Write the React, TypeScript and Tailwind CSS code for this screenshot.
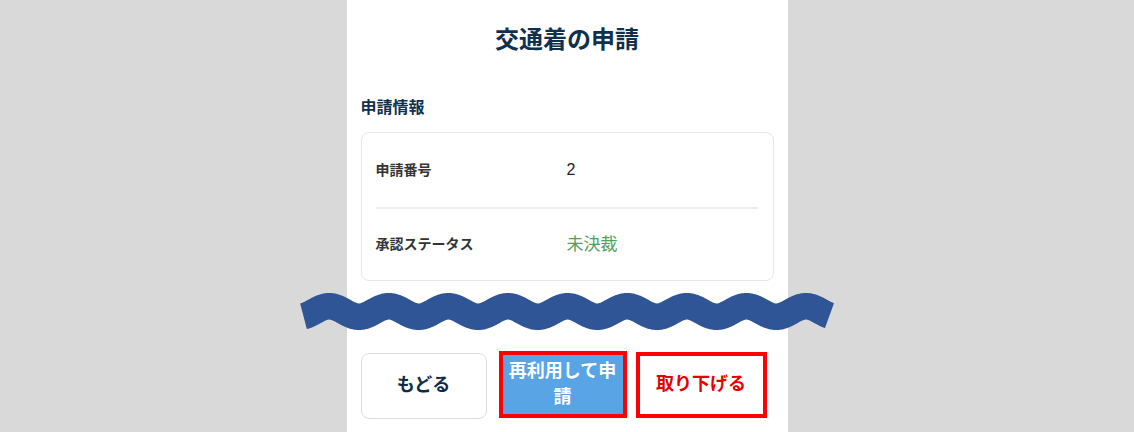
import React from "react";

const buildWave = () => {
  const x0 = 303.5;
  const x1 = 829.5;
  const crest = 329.2;
  const period = 59.6;
  const amp = 5.25;
  const mid = 311.5;
  const pts: string[] = [];
  for (let x = x0; x <= x1 + 0.001; x += 1) {
    const y = mid - amp * Math.cos((2 * Math.PI * (x - crest)) / period);
    pts.push(`${(x - 290).toFixed(2)},${(y - 280).toFixed(2)}`);
  }
  return "M" + pts.join(" L");
};

const wavePath = buildWave();

export default function App() {
  const font = { fontFamily: '"Liberation Sans", "Noto Sans CJK JP", "Noto Sans", sans-serif' };
  return (
    <div className="relative w-full h-[432px] bg-[#d9d9d9] overflow-hidden" style={font}>
      <div className="mx-auto w-[441px] h-[432px] bg-white px-[14px]">
        <div className="h-[80px] flex items-center justify-center">
          <h1 className="text-[24px] font-bold text-[#10304d] leading-none">交通着の申請</h1>
        </div>
        <div className="mt-[16px] h-[24px] flex items-center">
          <h2 className="text-[16px] font-bold text-[#10304d] leading-none">申請情報</h2>
        </div>
        <div className="mt-[12px] border border-[#e6e6e6] rounded-[8px] px-[14px]">
          <div className="h-[74px] flex items-center">
            <div className="w-[191px] text-[14px] font-bold text-[#333333]">申請番号</div>
            <div className="text-[16px] text-[#222222]">2</div>
          </div>
          <div className="h-[2px] bg-[#eeeeee] mr-[1px]" />
          <div className="h-[71px] flex items-center">
            <div className="w-[191px] text-[14px] font-bold text-[#333333]">承認ステータス</div>
            <div className="text-[17px] text-[#52a060]">未決裁</div>
          </div>
        </div>
        <div className="mt-[70px] flex items-start">
          <button className="w-[126px] h-[66px] mt-[2px] border border-[#dddddd] rounded-[8px] bg-white flex items-center justify-center text-[18px] font-bold text-[#0f2b46] pb-[2px]">
            もどる
          </button>
          <button className="ml-[12px] w-[128px] h-[67px] border-[4px] border-[#ff0000] bg-[#58a4e4] flex items-center justify-center text-center text-[18px] leading-[26px] font-bold text-white px-[4px] pb-[2px]">
            再利用して申請
          </button>
          <button className="ml-[9px] w-[131px] h-[66px] mt-[1px] border-[4px] border-[#ff0000] bg-white flex items-center justify-center text-[18px] font-bold text-[#e60000] pb-[2px]">
            取り下げる
          </button>
        </div>
      </div>
      <svg
        className="absolute left-[290px] top-[280px] pointer-events-none"
        width="560"
        height="70"
        viewBox="0 0 560 70"
      >
        <path d={wavePath} fill="none" stroke="#2f5597" strokeWidth="26.5" strokeLinecap="butt" strokeLinejoin="round" />
      </svg>
    </div>
  );
}
